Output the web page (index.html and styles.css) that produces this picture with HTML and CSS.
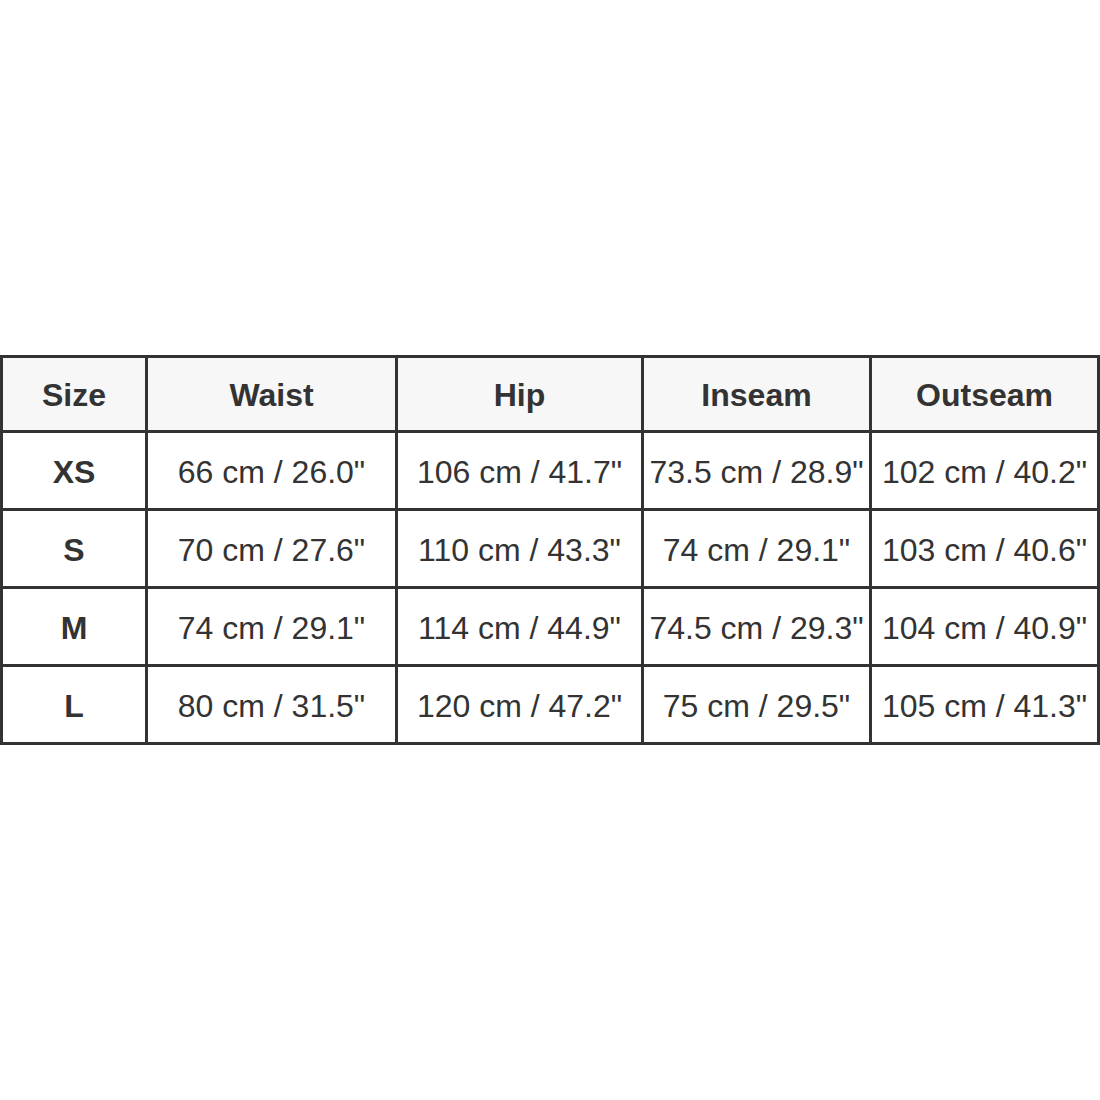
FILE: index.html
```html
<!DOCTYPE html>
<html>
<head>
<meta charset="utf-8">
<link rel="stylesheet" href="styles.css">
</head>
<body>
<div class="page">
<table class="size-table">
<colgroup>
<col class="c-size">
<col class="c-waist">
<col class="c-hip">
<col class="c-inseam">
<col class="c-outseam">
</colgroup>
<thead>
<tr><th>Size</th><th>Waist</th><th>Hip</th><th>Inseam</th><th>Outseam</th></tr>
</thead>
<tbody>
<tr><th>XS</th><td>66 cm / 26.0"</td><td>106 cm / 41.7"</td><td>73.5 cm / 28.9"</td><td>102 cm / 40.2"</td></tr>
<tr><th>S</th><td>70 cm / 27.6"</td><td>110 cm / 43.3"</td><td>74 cm / 29.1"</td><td>103 cm / 40.6"</td></tr>
<tr><th>M</th><td>74 cm / 29.1"</td><td>114 cm / 44.9"</td><td>74.5 cm / 29.3"</td><td>104 cm / 40.9"</td></tr>
<tr><th>L</th><td>80 cm / 31.5"</td><td>120 cm / 47.2"</td><td>75 cm / 29.5"</td><td>105 cm / 41.3"</td></tr>
</tbody>
</table>
</div>
</body>
</html>
```
FILE: styles.css
```css
html, body {
  margin: 0;
  padding: 0;
  background: #ffffff;
}
.page {
  width: 1100px;
  height: 1100px;
  display: flex;
  align-items: center;
}
.size-table {
  width: 1100px;
  table-layout: fixed;
  border-collapse: separate;
  border-spacing: 0;
  border-top: 3px solid #333333;
  border-left: 3px solid #333333;
  font-family: "Liberation Sans", Arial, sans-serif;
  font-size: 32px;
  color: #333333;
}
.c-size { width: 145px; }
.c-waist { width: 250px; }
.c-hip { width: 246px; }
.c-inseam { width: 228px; }
.c-outseam { width: 228px; }
.size-table th,
.size-table td {
  box-sizing: border-box;
  border-right: 3px solid #333333;
  border-bottom: 3px solid #333333;
  height: 78px;
  padding: 3px 0 0 0;
  text-align: center;
  vertical-align: middle;
  white-space: nowrap;
  overflow: visible;
}
.size-table thead th {
  height: 75px;
  background: #f7f7f7;
}
.size-table th {
  font-weight: bold;
}
```
